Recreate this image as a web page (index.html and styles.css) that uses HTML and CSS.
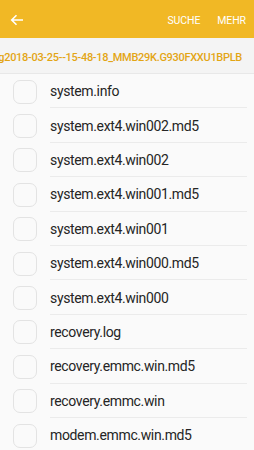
FILE: index.html
```html
<!DOCTYPE html>
<html lang="de">

<head>
    <meta charset="UTF-8">
    <meta name="viewport" content="width=device-width, initial-scale=1.0">
    <title>Dateien</title>
    <link rel="stylesheet" href="styles.css">
</head>

<body>
    <header class="topbar">
        <button class="back" aria-label="Zurück">
            <svg width="14" height="12" viewBox="0 0 14 12">
                <path d="M13 6H2M6.5 1.2L1.7 6l4.8 4.8" fill="none" stroke="#fff" stroke-width="1.6" />
            </svg>
        </button>
        <div class="actions">
            <span>SUCHE</span>
            <span>MEHR</span>
        </div>
    </header>

    <div class="path">
        <span class="path-text">TWRP/BACKUPS/ce0116018cc1a42e8b/backup_log2018-03-25--15-48-18_MMB29K.G930FXXU1BPLB</span>
    </div>

    <ul class="files" id="files"></ul>

    <script>
        const files = [
            'system.info',
            'system.ext4.win002.md5',
            'system.ext4.win002',
            'system.ext4.win001.md5',
            'system.ext4.win001',
            'system.ext4.win000.md5',
            'system.ext4.win000',
            'recovery.log',
            'recovery.emmc.win.md5',
            'recovery.emmc.win',
            'modem.emmc.win.md5'
        ];
        const list = document.getElementById('files');
        files.forEach((name) => {
            const item = document.createElement('li');
            item.innerHTML = `
                <span class="check"></span>
                <span class="name">${name}</span>
            `;
            list.appendChild(item);
        });
    </script>
</body>

</html>
```

FILE: styles.css
```css
body {
    margin: 0;
    background-color: #fafafa;
    font-family: Roboto, "Noto Sans", sans-serif;
    overflow: hidden;
}

.topbar {
    height: 38px;
    background-color: #f1b825;
    display: flex;
    align-items: center;
    justify-content: space-between;
}

.back {
    border: none;
    background: none;
    padding: 2px 0 0 10px;
    height: 38px;
    display: flex;
    align-items: center;
}

.actions {
    display: flex;
    gap: 17px;
    padding: 2px 8px 0 0;
    color: #fff;
    font-size: 10.5px;
    letter-spacing: -0.1px;
}

.path {
    height: 36px;
    background-color: #f4f4f4;
    border-bottom: 1px solid #e8e8e8;
    box-sizing: border-box;
    display: flex;
    align-items: center;
    justify-content: flex-end;
    padding: 3px 12px 0 0;
    overflow: hidden;
    white-space: nowrap;
}

.path-text {
    color: #e3a514;
    font-size: 11px;
    font-weight: 500;
    letter-spacing: -0.3px;
}

.files {
    list-style: none;
    margin: 0;
    padding: 0;
}

.files li {
    height: 34.4px;
    display: flex;
    align-items: center;
}

.check {
    width: 22px;
    height: 22px;
    margin: 1px 13px 0 13px;
    border: 1.5px solid #e3e3e3;
    border-radius: 7px;
    flex-shrink: 0;
}

.name {
    flex: 1;
    height: 100%;
    display: flex;
    align-items: center;
    padding-top: 1px;
    margin-right: 7px;
    border-bottom: 1px solid #ebebeb;
    box-sizing: border-box;
    color: #252525;
    font-size: 14px;
    letter-spacing: -0.35px;
}
```
